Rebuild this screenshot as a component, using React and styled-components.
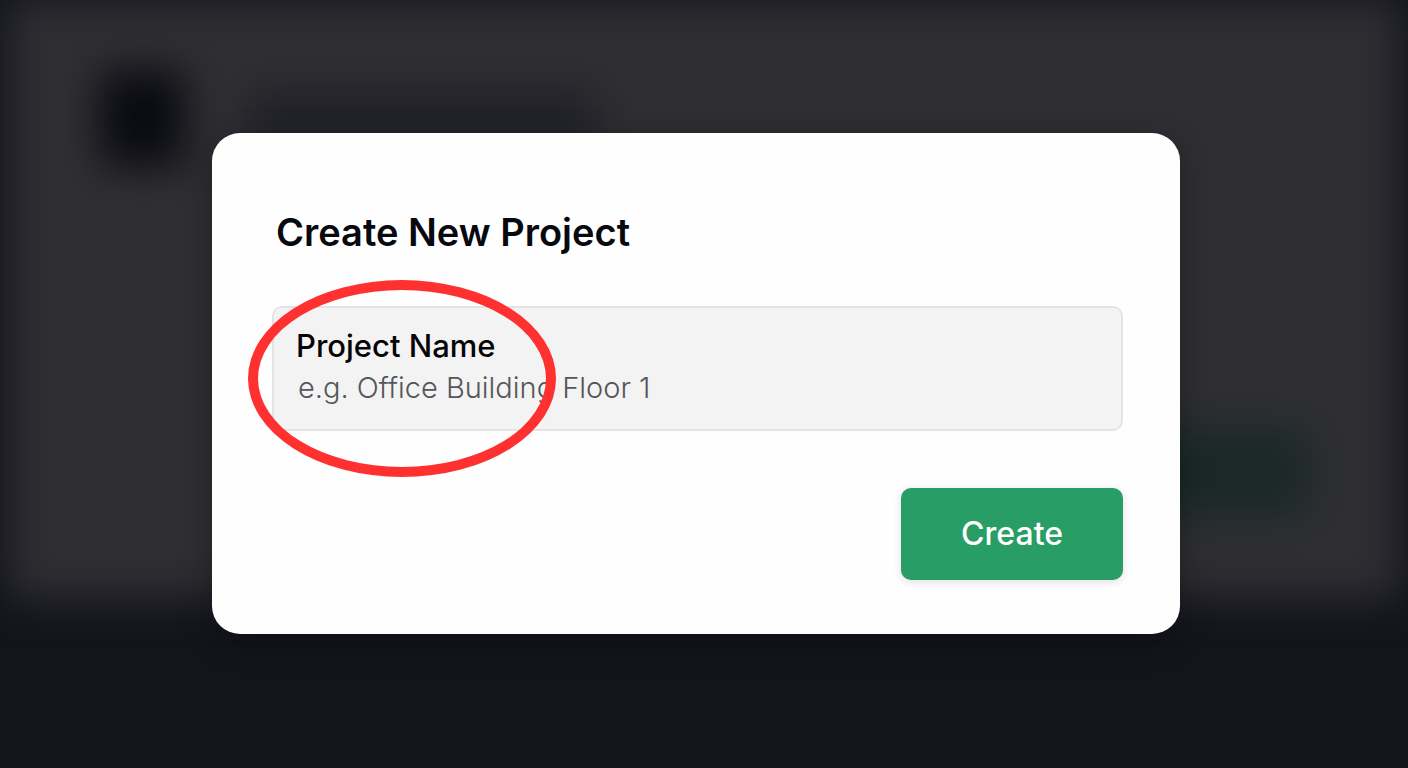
import React, { useState } from 'react'
import styled, { createGlobalStyle } from 'styled-components';

function App() {

  const [name, setName] = useState('');

  return (
    <>
      <GlobalStyle />
      <Page>
        <Behind aria-hidden="true">
          <Panel>
            <PanelHeader>
              <Logo />
              <TitleBar />
            </PanelHeader>
            <PanelFooter>
              <ActionBar />
            </PanelFooter>
          </Panel>
        </Behind>
        <Overlay>
          <Modal role="dialog" aria-labelledby="dialog-title" onSubmit={(e) => e.preventDefault()}>
            <Title id="dialog-title">Create New Project</Title>
            <Field>
              <Label htmlFor="project-name">Project Name</Label>
              <Input
                id="project-name"
                type="text"
                placeholder="e.g. Office Building Floor 1"
                value={name}
                onChange={(e) => setName(e.target.value)}
              />
              <Highlight />
            </Field>
            <Actions>
              <Button type="submit">Create</Button>
            </Actions>
          </Modal>
        </Overlay>
      </Page>
    </>
  )
}


const GlobalStyle = createGlobalStyle`
 *{
  box-sizing: border-box;
 }
 body{
  margin: 0;
  background: #14151c;
  font-family: Inter, "Liberation Sans", sans-serif;
 }
`;

const Page = styled.div`
 display: grid;
 min-height: 100vh;
 overflow: hidden;
`;

/* dimmed page under the dialog, both share the one grid cell */
const Behind = styled.div`
 grid-area: 1 / 1;
 padding: 0 8px 170px;
 display: flex;
 filter: blur(20px);
`;

const Panel = styled.div`
 flex: 1;
 display: flex;
 flex-direction: column;
 justify-content: space-between;
 padding: 70px 92px 84px;
 background: #2e2e33;
`;

const PanelHeader = styled.div`
 display: flex;
 align-items: center;
 gap: 64px;
`;

const Logo = styled.div`
 width: 84px;
 height: 96px;
 background: #0a0b10;
`;

const TitleBar = styled.div`
 width: 350px;
 height: 56px;
 background: #202126;
`;

const PanelFooter = styled.div`
 display: flex;
 justify-content: flex-end;
`;

const ActionBar = styled.div`
 width: 240px;
 height: 84px;
 background: #1a2826;
`;

const Overlay = styled.div`
 grid-area: 1 / 1;
 z-index: 1;
 display: flex;
 align-items: center;
 justify-content: center;
 padding: 0 16px 2px 0;
`;

const Modal = styled.form`
 width: 100%;
 max-width: 968px;
 padding: 75px 57px 54px 60px;
 background: #fefefe;
 border-radius: 28px;
 box-shadow: 0 8px 32px rgba(0, 0, 0, 0.3);
`;

const Title = styled.h1`
 margin: 0 0 50px;
 padding-left: 4px;
 font-size: 38px;
 line-height: 48px;
 font-weight: 600;
 color: #08090f;
`;

const Field = styled.div`
 position: relative;
 display: flex;
 flex-direction: column;
 margin-bottom: 57px;
 padding: 17px 22px 20px;
 background: #f3f3f3;
 border: 2px solid #e2e4e5;
 border-radius: 10px;
`;

const Label = styled.label`
 font-size: 31px;
 line-height: 42px;
 font-weight: 500;
 color: #050505;
`;

const Input = styled.input`
 width: 100%;
 height: 42px;
 padding: 0 2px;
 border: none;
 outline: none;
 background: transparent;
 font-family: inherit;
 font-size: 29px;
 line-height: 42px;
 color: #050505;
 &::placeholder{
  color: #55565a;
  font-weight: 300;
  opacity: 1;
 }
`;

/* red ring that points at the label */
const Highlight = styled.span`
 position: absolute;
 top: -28px;
 left: -26px;
 width: 308px;
 height: 197px;
 border: 10px solid #fe3130;
 border-radius: 50%;
 pointer-events: none;
`;

const Actions = styled.div`
 display: flex;
 justify-content: flex-end;
`;

const Button = styled.button`
 padding: 24px 60px;
 border: none;
 border-radius: 10px;
 background: #299d66;
 box-shadow: 0 2px 8px rgba(0, 0, 0, 0.12);
 color: #ffffff;
 font-family: inherit;
 font-size: 32px;
 line-height: 44px;
 font-weight: 500;
 cursor: pointer;
`;

export default App
